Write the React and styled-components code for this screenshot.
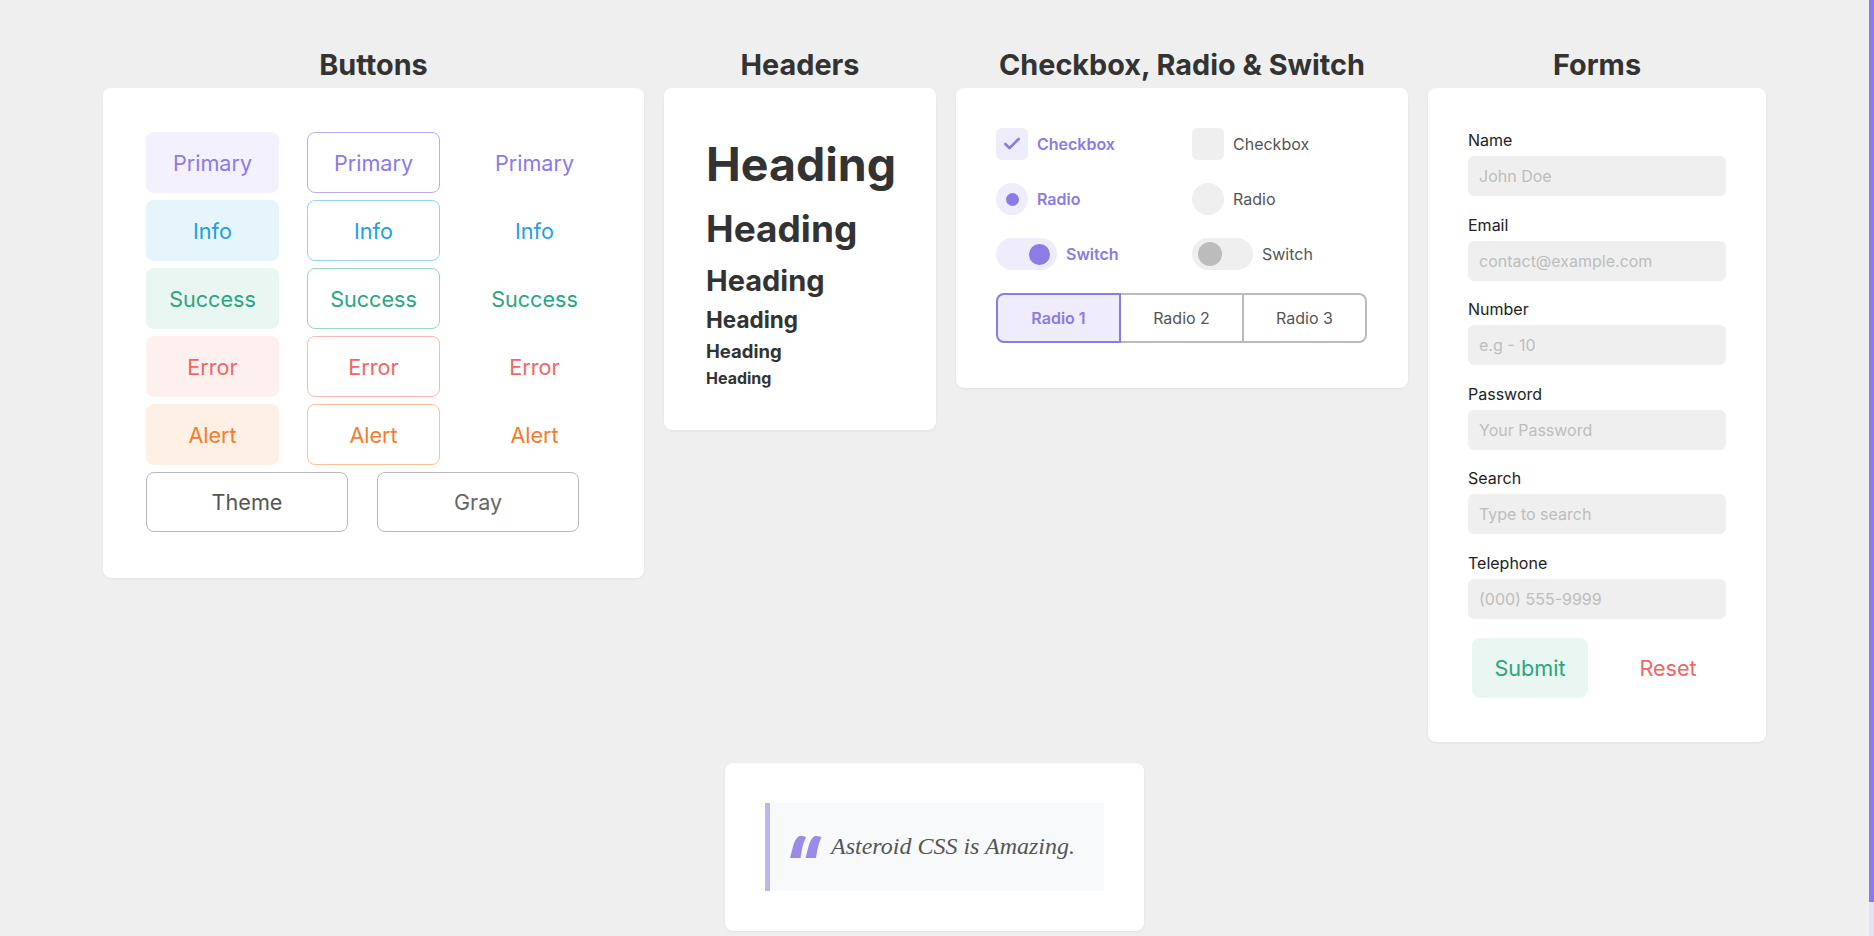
import React from "react";
import styled, { createGlobalStyle, css } from "styled-components";
import { Check } from "lucide-react";

const tones = {
  primary: { fg: "#8c7ae6", bg: "#f3f1fd", border: "#b9aef2" },
  info: { fg: "#1ba1e2", bg: "#e6f5fc", border: "#92d5f3" },
  success: { fg: "#2aa582", bg: "#e9f6f2", border: "#98d6c3" },
  error: { fg: "#ef6663", bg: "#fff0f0", border: "#f8b8b6" },
  alert: { fg: "#f67b2a", bg: "#fff0e6", border: "#fbc196" },
};

const GlobalStyle = createGlobalStyle`
  body {
    margin: 0;
    background: #efefef;
    color: #333;
    font-family: Inter, "Noto Sans", sans-serif;
  }
  * {
    box-sizing: border-box;
  }
`;

// stand-in for the themed page scrollbar on the right edge
const ScrollRail = styled.div`
  position: fixed;
  top: 0;
  right: 0;
  bottom: 0;
  width: 5px;
  background: #e4e2f1;

  &::before {
    content: "";
    display: block;
    height: 96.4%;
    background: #8c7ae6;
  }
`;

const Page = styled.main`
  display: flex;
  flex-direction: column;
  align-items: center;
  gap: 21px;
  padding: 48px 5px 41px 0;
`;

const Row = styled.div`
  display: flex;
  justify-content: center;
  align-items: flex-start;
  gap: 20px;
`;

const Section = styled.section`
  display: flex;
  flex-direction: column;
  align-items: center;
`;

const Title = styled.h2`
  margin: 0 0 6px;
  font-size: 28.8px;
  line-height: 34px;
  font-weight: 700;
  color: #333;
`;

const Card = styled.div`
  width: ${p => p.$w}px;
  padding: ${p => p.$pad || "40px"};
  background: #fff;
  border-radius: 8px;
  box-shadow: 0 1px 3px rgba(0, 0, 0, 0.06);
`;

/* buttons */
const ButtonGrid = styled.div`
  display: grid;
  grid-template-columns: repeat(3, 133px);
  grid-auto-rows: 61px;
  gap: 7px 28px;
`;

const Btn = styled.button`
  height: 100%;
  border: 1px solid transparent;
  border-radius: 8px;
  font-family: Inter, "Noto Sans", sans-serif;
  font-size: 21.6px;
  font-weight: 400;
  color: ${p => tones[p.$tone].fg};
  background: transparent;
  cursor: pointer;

  ${p =>
    p.$variant === "fill" &&
    css`
      background: ${tones[p.$tone].bg};
    `}

  ${p =>
    p.$variant === "outline" &&
    css`
      border-color: ${tones[p.$tone].border};
    `}
`;

const WideRow = styled.div`
  display: flex;
  gap: 29px;
  margin-top: 7px;
`;

const GhostBtn = styled.button`
  width: 202px;
  height: 60px;
  border: 1px solid #b9b9b9;
  border-radius: 8px;
  background: #fff;
  font-family: Inter, "Noto Sans", sans-serif;
  font-size: 21.6px;
  color: ${p => p.$color};
`;

/* headers */
const Heading = styled.div`
  margin: 0 0 ${p => p.$mb}px;
  font-size: ${p => p.$size}px;
  line-height: 1.3;
  font-weight: 700;
  color: #333;
`;

/* checkbox, radio, switch */
const ChoiceGrid = styled.div`
  display: grid;
  grid-template-columns: repeat(2, 196px);
  row-gap: 23px;
`;

const Choice = styled.label`
  display: flex;
  align-items: center;
  gap: 9px;
  font-size: 16px;
  font-weight: ${p => (p.$on ? 600 : 400)};
  color: ${p => (p.$on ? "#8c7ae6" : "#555")};
`;

const Box = styled.span`
  display: flex;
  align-items: center;
  justify-content: center;
  width: 32px;
  height: 32px;
  border-radius: ${p => (p.$round ? "50%" : "6px")};
  background: ${p => (p.$on ? "#efecfc" : "#efefef")};
`;

const Dot = styled.span`
  width: 13px;
  height: 13px;
  border-radius: 50%;
  background: #8c7ae6;
`;

const Track = styled.span`
  display: flex;
  align-items: center;
  justify-content: ${p => (p.$on ? "flex-end" : "flex-start")};
  width: 61px;
  height: 32px;
  padding: 0 ${p => (p.$on ? 7 : 6)}px;
  border-radius: 16px;
  background: ${p => (p.$on ? "#efecfc" : "#efefef")};
`;

const Knob = styled.span`
  width: ${p => (p.$on ? 21 : 24)}px;
  height: ${p => (p.$on ? 21 : 24)}px;
  border-radius: 50%;
  background: ${p => (p.$on ? "#8c7ae6" : "#bcbcbc")};
`;

const Segmented = styled.div`
  display: flex;
  width: 371px;
  height: 50px;
  margin-top: 23px;
`;

const Segment = styled.span`
  flex: 1;
  display: flex;
  align-items: center;
  justify-content: center;
  border: 2px solid #bbb;
  border-left: none;
  font-size: 16px;
  color: #555;

  &:last-child {
    border-radius: 0 8px 8px 0;
  }

  ${p =>
    p.$on &&
    css`
      border: 2px solid #8c7ae6;
      border-radius: 8px 0 0 8px;
      background: #efecfb;
      color: #8c7ae6;
      font-weight: 600;
    `}
`;

/* forms */
const Field = styled.div`
  margin-bottom: 17.5px;

  &:last-of-type {
    margin-bottom: 0;
  }
`;

const Label = styled.label`
  display: block;
  margin-bottom: 4px;
  font-size: 16px;
  line-height: 23px;
  color: #222;
`;

const Input = styled.input`
  display: block;
  width: 100%;
  height: 40px;
  padding: 0 11px;
  border: none;
  border-radius: 6px;
  background: #efefef;
  font-family: Inter, "Noto Sans", sans-serif;
  font-size: 16px;
  color: #333;
  outline: none;

  &::placeholder {
    color: #bdbdbd;
  }
`;

const Actions = styled.div`
  display: flex;
  gap: 22px;
  margin-top: 19px;
  padding-left: 4px;
`;

const FormBtn = styled.button`
  width: 118px;
  height: 60px;
  border: none;
  border-radius: 8px;
  background: ${p => (p.$fill ? tones[p.$tone].bg : "transparent")};
  color: ${p => tones[p.$tone].fg};
  font-family: Inter, "Noto Sans", sans-serif;
  font-size: 21.6px;
`;

/* quote */
const Quote = styled.blockquote`
  display: flex;
  align-items: center;
  gap: 9px;
  height: 88px;
  margin: 0;
  padding-left: 20px;
  border-left: 5px solid #bdb4f0;
  background: #f8f9fa;
`;

const QuoteText = styled.span`
  font-family: "Liberation Serif", "Times New Roman", serif;
  font-style: italic;
  font-size: 24px;
  color: #555;
`;

function QuoteMark() {
  const wedge =
    "M9.5 0 C12.5 0 15 0.4 16 1.6 C14 5 13 9 12 13 L10.5 22 L0 22 L2.5 12.5 C4 6.5 6 1.5 9.5 0 Z";
  return (
    <svg width="32" height="22" viewBox="0 0 32 22" fill="#9b8ae9">
      <path d={wedge} />
      <path d={wedge} transform="translate(15.5 0)" />
    </svg>
  );
}

const buttonTones = [
  ["primary", "Primary"],
  ["info", "Info"],
  ["success", "Success"],
  ["error", "Error"],
  ["alert", "Alert"],
];

const headings = [
  [46.5, 11],
  [37, 8],
  [29, 6],
  [22.5, 5],
  [18.5, 4.5],
  [16, 0],
];

const fields = [
  ["Name", "text", "John Doe"],
  ["Email", "email", "contact@example.com"],
  ["Number", "number", "e.g - 10"],
  ["Password", "password", "Your Password"],
  ["Search", "search", "Type to search"],
  ["Telephone", "tel", "(000) 555-9999"],
];

export default function App() {
  return (
    <>
      <GlobalStyle />
      <ScrollRail />
      <Page>
        <Row>
          <Section>
            <Title>Buttons</Title>
            <Card $w={541} $pad={"44px 43px 46px"}>
              <ButtonGrid>
                {buttonTones.map(([tone, text]) => (
                  <React.Fragment key={tone}>
                    <Btn $tone={tone} $variant={"fill"}>{text}</Btn>
                    <Btn $tone={tone} $variant={"outline"}>{text}</Btn>
                    <Btn $tone={tone} $variant={"text"}>{text}</Btn>
                  </React.Fragment>
                ))}
              </ButtonGrid>
              <WideRow>
                <GhostBtn $color={"#555"}>Theme</GhostBtn>
                <GhostBtn $color={"#666"}>Gray</GhostBtn>
              </WideRow>
            </Card>
          </Section>

          <Section>
            <Title>Headers</Title>
            <Card $w={272} $pad={"46px 20px 41px 42px"}>
              {headings.map(([size, mb], i) => (
                <Heading key={i} $size={size} $mb={mb}>
                  Heading
                </Heading>
              ))}
            </Card>
          </Section>

          <Section>
            <Title>Checkbox, Radio &amp; Switch</Title>
            <Card $w={452} $pad={"40px 40px 45px"}>
              <ChoiceGrid>
                <Choice $on>
                  <Box $on>
                    <Check size={20} strokeWidth={3.2} color={"#8c7ae6"} />
                  </Box>
                  Checkbox
                </Choice>
                <Choice>
                  <Box />
                  Checkbox
                </Choice>
                <Choice $on>
                  <Box $on $round>
                    <Dot />
                  </Box>
                  Radio
                </Choice>
                <Choice>
                  <Box $round />
                  Radio
                </Choice>
                <Choice $on>
                  <Track $on>
                    <Knob $on />
                  </Track>
                  Switch
                </Choice>
                <Choice>
                  <Track>
                    <Knob />
                  </Track>
                  Switch
                </Choice>
              </ChoiceGrid>
              <Segmented>
                <Segment $on>Radio 1</Segment>
                <Segment>Radio 2</Segment>
                <Segment>Radio 3</Segment>
              </Segmented>
            </Card>
          </Section>

          <Section>
            <Title>Forms</Title>
            <Card $w={338} $pad={"41px 40px 44px"}>
              {fields.map(([label, type, placeholder]) => (
                <Field key={label}>
                  <Label>{label}</Label>
                  <Input type={type} placeholder={placeholder} />
                </Field>
              ))}
              <Actions>
                <FormBtn $tone={"success"} $fill>
                  Submit
                </FormBtn>
                <FormBtn $tone={"error"}>Reset</FormBtn>
              </Actions>
            </Card>
          </Section>
        </Row>

        <Card $w={419}>
          <Quote>
            <QuoteMark />
            <QuoteText>Asteroid CSS is Amazing.</QuoteText>
          </Quote>
        </Card>
      </Page>
    </>
  );
}
